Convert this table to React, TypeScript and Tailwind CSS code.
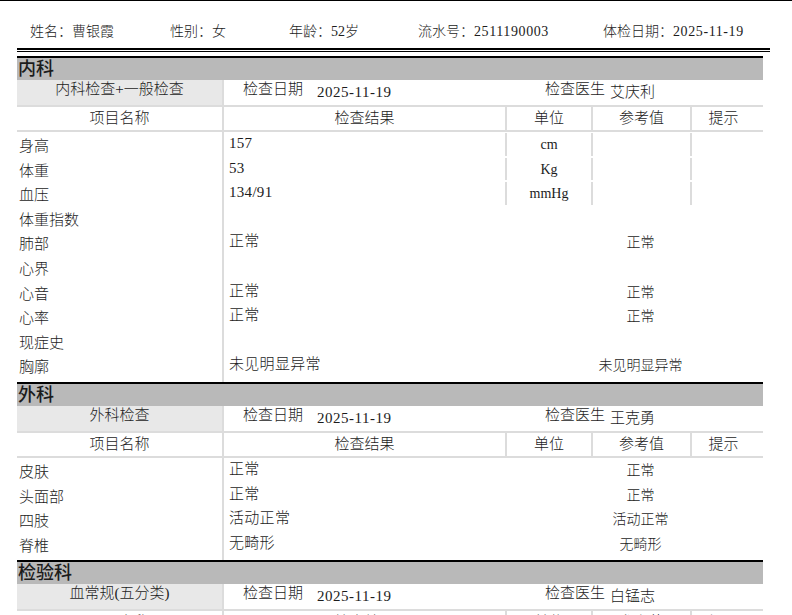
import React from "react";

type Row = { name: string; result?: string; unit?: string; ref?: string; boxed?: boolean };

const sec1: Row[] = [
  { name: "身高", result: "157", unit: "cm", boxed: true },
  { name: "体重", result: "53", unit: "Kg", boxed: true },
  { name: "血压", result: "134/91", unit: "mmHg", boxed: true },
  { name: "体重指数" },
  { name: "肺部", result: "正常", ref: "正常" },
  { name: "心界" },
  { name: "心音", result: "正常", ref: "正常" },
  { name: "心率", result: "正常", ref: "正常" },
  { name: "现症史" },
  { name: "胸廓", result: "未见明显异常", ref: "未见明显异常" },
];

const sec2: Row[] = [
  { name: "皮肤", result: "正常", ref: "正常" },
  { name: "头面部", result: "正常", ref: "正常" },
  { name: "四肢", result: "活动正常", ref: "活动正常" },
  { name: "脊椎", result: "无畸形", ref: "无畸形" },
];

const GRID = "grid grid-cols-[205px_283px_86px_99px_73px]";

function SubHeader({ title, date, doctor }: { title: string; date: string; doctor: string }) {
  return (
    <div className="flex h-[25px]">
      <div className="w-[205px] bg-[#e8e8e8] text-center leading-[16px] pt-[1px] text-[15px]">{title}</div>
      <div className="flex-1 flex border-l-2 border-[#dcdcdc] pl-[19px] text-[15px]">
        <span className="w-[74px] leading-[16px] pt-[1px]">检查日期</span>
        <span className="w-[228px] leading-[16px] pt-[4px] tracking-[0.5px]">{date}</span>
        <span className="w-[65px] leading-[16px] pt-[1px]">检查医生</span>
        <span className="leading-[16px] pt-[4px]">{doctor}</span>
      </div>
    </div>
  );
}

function HeaderRow() {
  return (
    <div className={`${GRID} h-[27px] border-y-2 border-[#dcdcdc] text-[15px]`}>
      <div className="text-center leading-[23px]">项目名称</div>
      <div className="text-center leading-[23px] border-l-2 border-[#dcdcdc]">检查结果</div>
      <div className="text-center leading-[23px] border-l-2 border-[#dcdcdc]">单位</div>
      <div className="text-center leading-[23px] border-l-2 border-[#dcdcdc]">参考值</div>
      <div className="text-center leading-[23px] border-l-2 border-[#dcdcdc] pr-[8px]">提示</div>
    </div>
  );
}

function DataRow({ r }: { r: Row }) {
  return (
    <div className={`${GRID} h-[24.6px] text-[15px]`}>
      <div className="pl-[2px] pt-[4px] leading-[20px]">{r.name}</div>
      <div className="border-l-2 border-[#dcdcdc] pl-[5px] pt-[1px] leading-[20px] tracking-[0.3px]">{r.result ?? ""}</div>
      <div className="flex">
        <div className={`flex-1 my-[1px] text-center pt-[3px] leading-[18px] text-[14px] ${r.boxed ? "border-l-2 border-[#dcdcdc]" : ""}`}>
          {r.unit ?? ""}
        </div>
      </div>
      <div className="flex">
        <div className={`flex-1 my-[1px] text-center pt-[3px] leading-[18px] text-[14px] ${r.boxed ? "border-l-2 border-[#dcdcdc]" : ""}`}>
          {r.ref ?? ""}
        </div>
      </div>
      <div className="flex">
        <div className={`flex-1 my-[1px] ${r.boxed ? "border-l-2 border-[#dcdcdc]" : ""}`} />
      </div>
    </div>
  );
}

function Spacer() {
  return (
    <div className={`${GRID} h-[4px]`}>
      <div />
      <div className="border-l-2 border-[#dcdcdc]" />
      <div />
      <div />
      <div />
    </div>
  );
}

function Section({
  title,
  sub,
  date,
  doctor,
  rows,
}: {
  title: string;
  sub: string;
  date: string;
  doctor: string;
  rows: Row[];
}) {
  return (
    <div>
      <div className="border-t-2 border-black bg-[#b9b9b9] h-[24px] text-[18px] leading-[22px] pl-[1px] font-medium">{title}</div>
      <SubHeader title={sub} date={date} doctor={doctor} />
      <HeaderRow />
      {rows.map((r) => (
        <DataRow key={r.name} r={r} />
      ))}
      {rows.length > 0 && <Spacer />}
    </div>
  );
}

export default function App() {
  return (
    <div className="h-[615px] overflow-hidden bg-white text-[#1c1c1c] font-light font-['Liberation_Serif','Noto_Sans_CJK_SC',serif] border-t border-black">
      <div className="h-[47px] pt-[22px] pl-[30px] flex text-[14px] leading-[18px]">
        <span className="w-[140px]">姓名：曹银霞</span>
        <span className="w-[119px]">性别：女</span>
        <span className="w-[129px]">年龄：52岁</span>
        <span className="w-[185px]">
          流水号：<span className="tracking-[0.6px]">2511190003</span>
        </span>
        <span>
          体检日期：<span className="tracking-[0.6px]">2025-11-19</span>
        </span>
      </div>
      <div className="ml-[17px] w-[753px]">
        <div className="h-[2px] bg-black" />
        <div className="h-[1px] mt-[1px] bg-black" />
      </div>
      <div className="ml-[17px] w-[746px] mt-[4px]">
        <Section title="内科" sub="内科检查+一般检查" date="2025-11-19" doctor="艾庆利" rows={sec1} />
        <Section title="外科" sub="外科检查" date="2025-11-19" doctor="王克勇" rows={sec2} />
        <Section title="检验科" sub="血常规(五分类)" date="2025-11-19" doctor="白锰志" rows={[]} />
      </div>
    </div>
  );
}
